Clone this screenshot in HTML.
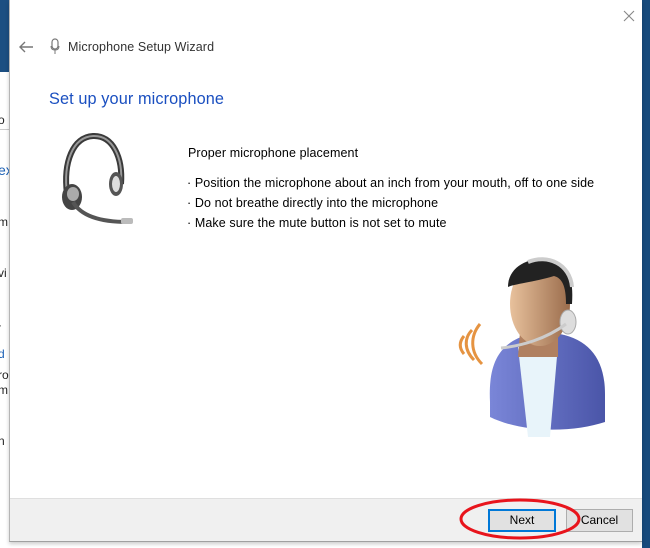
<!DOCTYPE html>
<html><head><meta charset="utf-8"><style>
html,body{margin:0;padding:0;width:650px;height:548px;overflow:hidden;background:#fff;font-family:"Liberation Sans",sans-serif;}
.bgtop{position:absolute;left:0;top:0;width:10px;height:72px;background:#1c4f82;}
.bgleft{position:absolute;left:0;top:72px;width:10px;height:476px;background:#fff;}
.bgright{position:absolute;left:642px;top:0;width:8px;height:548px;background:#174a7c;}
.frag{position:absolute;left:-2px;font-size:12px;color:#222;}
.dlg{position:absolute;left:9px;top:0;width:632px;height:541px;background:#fff;border-left:1px solid #b5b5b5;border-bottom:1px solid #a0a0a0;box-shadow:0 2px 4px rgba(0,0,0,.2);}
.foot{position:absolute;left:0;right:0;top:498px;bottom:0;background:#f0f0f0;border-top:1px solid #dfdfdf;}
.t{position:absolute;font-size:12.5px;color:#000;white-space:nowrap;letter-spacing:.1px;}
.btn{position:absolute;height:21px;border:1px solid #adadad;background:#e1e1e1;font-size:12px;text-align:center;line-height:21px;}
</style></head><body>
<div class="bgtop"></div><div class="bgleft"></div>
<div class="frag" style="top:113px;">o</div>
<div style="position:absolute;left:0;top:129px;width:10px;height:1px;background:#ccc"></div>
<div class="frag" style="top:162px;color:#1a5fb4;font-size:14px">ex</div>
<div class="frag" style="top:215px">m</div>
<div class="frag" style="top:266px">vi</div>
<div class="frag" style="top:318px">·</div>
<div class="frag" style="top:347px;color:#1a5fb4">d</div>
<div class="frag" style="top:368px">ro</div>
<div class="frag" style="top:383px">m</div>
<div class="frag" style="top:434px">n</div>
<div class="bgright"></div>
<div class="dlg">
  <svg style="position:absolute;left:8px;top:40px" width="16" height="14"><path d="M15 7H2M7 2L2 7l5 5" stroke="#777" stroke-width="1.4" fill="none"/></svg>
  <svg style="position:absolute;left:40px;top:38px" width="10" height="17"><rect x="2" y="1" width="6" height="10" rx="3" fill="none" stroke="#777" stroke-width="1.2"/><path d="M1 8c0 3 2 4 4 4s4-1 4-4M5 12v4" stroke="#777" fill="none"/></svg>
  <div class="t" style="left:58px;top:40px;color:#333;font-size:12.5px">Microphone Setup Wizard</div>
  <svg style="position:absolute;left:613px;top:10px" width="12" height="12"><path d="M1 1l10 10M11 1L1 11" stroke="#888" stroke-width="1.1"/></svg>
  <div class="t" style="left:39px;top:90px;color:#1a4fc0;font-size:16.3px">Set up your microphone</div>
  <svg style="position:absolute;left:45px;top:132px" width="80" height="96">
    <path d="M12 62C8 30 18 5 38 4c20-1 30 22 28 48" stroke="#3a3a3a" stroke-width="6" fill="none"/>
    <path d="M12 62C8 30 18 5 38 4c20-1 30 22 28 48" stroke="#999" stroke-width="2" fill="none"/>
    <ellipse cx="61" cy="52" rx="7" ry="12" fill="#555"/><ellipse cx="61" cy="52" rx="4" ry="8" fill="#ddd"/>
    <ellipse cx="17" cy="65" rx="10" ry="13" fill="#444"/><ellipse cx="18" cy="62" rx="6" ry="7" fill="#aaa"/>
    <path d="M18 70c8 14 28 20 55 20" stroke="#555" stroke-width="4" fill="none"/>
    <rect x="66" y="86" width="12" height="6" rx="2" fill="#bbb"/>
  </svg>
  <div class="t" style="left:178px;top:146px">Proper microphone placement</div>
  <div class="t" style="left:177px;top:176px">· Position the microphone about an inch from your mouth, off to one side</div>
  <div class="t" style="left:177px;top:196px">· Do not breathe directly into the microphone</div>
  <div class="t" style="left:177px;top:216px">· Make sure the mute button is not set to mute</div>
  <svg style="position:absolute;left:440px;top:252px" width="160" height="185">
    <defs>
      <linearGradient id="sk" x1="0" x2="1"><stop offset="0" stop-color="#e8c19c"/><stop offset="1" stop-color="#9a6c4c"/></linearGradient>
      <linearGradient id="bl" x1="0" x2="1"><stop offset="0" stop-color="#7a86d8"/><stop offset="1" stop-color="#4a55a8"/></linearGradient>
    </defs>
    <path d="M40 150c-2-40 10-60 40-68h30c30 6 45 26 45 60v28c-30 10-80 12-115 -5z" fill="url(#bl)"/>
    <path d="M68 95l10 90 22 0 8-92z" fill="#e8f4fa"/>
    <path d="M70 80l-2 25 40 0 0-25z" fill="#b08060"/>
    <ellipse cx="90" cy="52" rx="30" ry="42" fill="url(#sk)"/>
    <path d="M58 35c0-20 20-30 40-28 20 2 26 20 24 45l-6 0c0-18-4-26-12-28-20 6-40 8-46 11z" fill="#222"/>
    <path d="M78 10c20-8 42 2 44 25" stroke="#ccc" stroke-width="4" fill="none"/>
    <ellipse cx="118" cy="70" rx="8" ry="12" fill="#ddd" stroke="#aaa"/>
    <path d="M116 72c-20 15-45 22-65 24" stroke="#ccc" stroke-width="3" fill="none"/>
    <path d="M30 72c-10 12-10 28 2 40M22 78c-8 8-8 20 2 30M14 84c-5 6-5 12 0 18" stroke="#e08020" stroke-width="3" fill="none" opacity=".85"/>
  </svg>
  <div class="foot">
    <div class="btn" style="left:478px;top:10px;width:64px;border:2px solid #0078d7;height:19px;line-height:19px">Next</div>
    <div class="btn" style="left:556px;top:10px;width:65px">Cancel</div>
  </div>
</div>
<svg style="position:absolute;left:458px;top:497px" width="125" height="45"><ellipse cx="62" cy="22" rx="59" ry="19" fill="none" stroke="#e8141c" stroke-width="3"/></svg>
</body></html>
